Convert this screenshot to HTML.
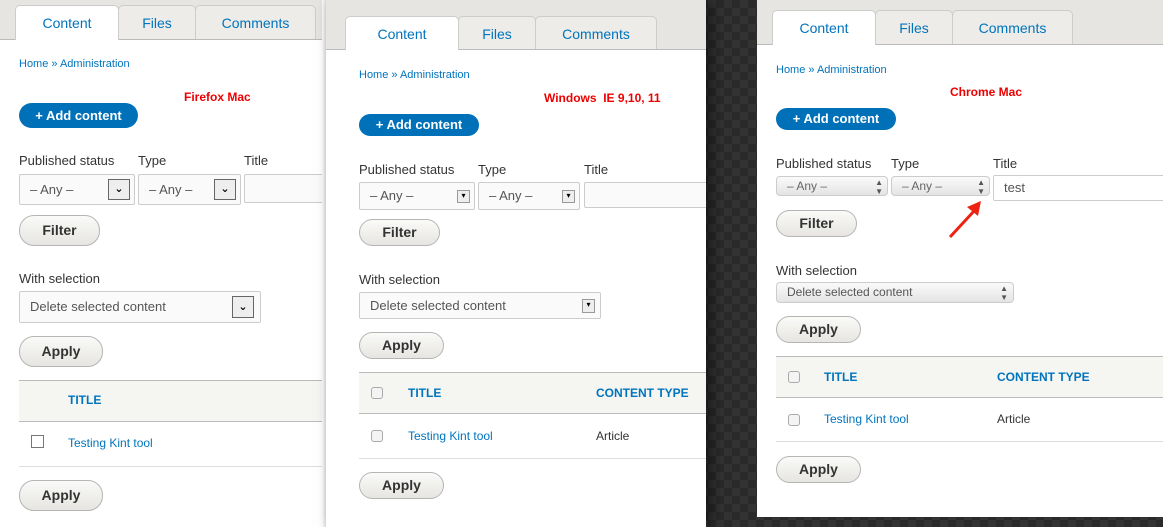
<!DOCTYPE html>
<html><head><meta charset="utf-8"><style>
*{box-sizing:border-box;margin:0;padding:0}
body{width:1163px;height:527px;position:relative;overflow:hidden;background:#2e2e2e;font-family:"Liberation Sans","DejaVu Sans",sans-serif;color:#333}
.chk{background-color:#2a2a2a;background-image:linear-gradient(45deg,#333 25%,transparent 25%,transparent 75%,#333 75%),linear-gradient(45deg,#333 25%,transparent 25%,transparent 75%,#333 75%);background-size:16px 16px;background-position:0 0,8px 8px}
.p{position:absolute;background:#fff;overflow:hidden}
.a{position:absolute;white-space:nowrap}
.bar{position:absolute;left:0;right:0;top:0;background:#e6e5e1;border-bottom:1px solid #bbb}
.tab{position:absolute;background:#edece8;border:1px solid #ccc;border-bottom:none;border-radius:5px 5px 0 0;color:#0074bd;font-size:14px;text-align:center}
.tab.on{background:#fff}
.bc{font-size:11px;color:#0074bd}
.red{color:#e00;font-weight:bold;font-size:12px}
.add{position:absolute;background:#0071b8;color:#fff;font-weight:bold;font-size:13px;border-radius:13px;text-align:center}
.lbl{font-size:13px;color:#333}
.sel{position:absolute;border:1px solid #ccc;background:#fafafa;font-size:13px;color:#555;padding-left:10px;border-radius:2px}
.btn{position:absolute;border:1px solid #b5b5b5;border-radius:15px;background:linear-gradient(#fafaf8,#e6e5e1);font-weight:bold;font-size:14px;color:#333;text-align:center}
.th{position:absolute;background:#f5f5f2;border-top:1px solid #bbb;border-bottom:1px solid #bbb}
.tl{color:#0074bd;font-size:12px;font-weight:bold}
.lnk{color:#0074bd;font-size:12px}
.cb{position:absolute;width:12px;height:12px;border:1px solid #aaa;border-radius:3px;background:#f4f4f4}
.ffarrow{position:absolute;width:22px;border:1px solid #666;background:#eee;font-size:11px;text-align:center;color:#000;font-weight:bold}
</style></head><body>
<div class="chk" style="position:absolute;left:700px;top:0;width:463px;height:527px"></div>

<!-- Panel 1 -->
<div class="p" style="left:0;top:0;width:330px;height:527px">
 <div class="bar" style="height:40px"></div>
 <div class="tab on" style="left:15px;top:5px;width:104px;height:35px;line-height:34px">Content</div>
 <div class="tab" style="left:118px;top:5px;width:78px;height:34px;line-height:34px">Files</div>
 <div class="tab" style="left:195px;top:5px;width:121px;height:34px;line-height:34px">Comments</div>
 <div class="a bc" style="left:19px;top:58px">Home » Administration</div>
 <div class="a red" style="left:184px;top:90px">Firefox Mac</div>
 <div class="add" style="left:19px;top:103px;width:119px;height:25px;line-height:25px">+ Add content</div>
 <div class="a lbl" style="left:19px;top:153px">Published status</div>
 <div class="a lbl" style="left:138px;top:153px">Type</div>
 <div class="a lbl" style="left:244px;top:153px">Title</div>
 <div class="sel" style="left:19px;top:174px;width:116px;height:31px;line-height:29px">– Any –<div class="ffarrow" style="right:4px;top:4px;height:21px;line-height:19px">⌄</div></div>
 <div class="sel" style="left:138px;top:174px;width:103px;height:31px;line-height:29px">– Any –<div class="ffarrow" style="right:4px;top:4px;height:21px;line-height:19px">⌄</div></div>
 <div class="sel" style="left:244px;top:174px;width:100px;height:29px"></div>
 <div class="btn" style="left:19px;top:215px;width:81px;height:31px;line-height:29px">Filter</div>
 <div class="a lbl" style="left:19px;top:271px">With selection</div>
 <div class="sel" style="left:19px;top:291px;width:242px;height:32px;line-height:30px">Delete selected content<div class="ffarrow" style="right:6px;top:4px;height:22px;line-height:20px">⌄</div></div>
 <div class="btn" style="left:19px;top:336px;width:84px;height:31px;line-height:29px">Apply</div>
 <div class="th" style="left:19px;top:380px;width:320px;height:42px"></div>
 <div class="a tl" style="left:68px;top:393px">TITLE</div>
 <div class="cb" style="left:31px;top:435px;width:13px;height:13px;border-radius:0;background:#fff;border-color:#777"></div>
 <div class="a lnk" style="left:68px;top:436px">Testing Kint tool</div>
 <div style="position:absolute;left:19px;top:466px;width:320px;height:1px;background:#ddd"></div>
 <div class="btn" style="left:19px;top:480px;width:84px;height:31px;line-height:29px">Apply</div>
</div>
<div style="position:absolute;left:322px;top:0;width:8px;height:527px;background:linear-gradient(90deg,#fff,#ccc)"></div>

<!-- Panel 2 -->
<div class="p" style="left:326px;top:0;width:380px;height:527px;box-shadow:6px 0 14px rgba(0,0,0,.5)">
 <div class="bar" style="height:50px"></div>
 <div class="tab on" style="left:19px;top:16px;width:114px;height:34px;line-height:34px">Content</div>
 <div class="tab" style="left:132px;top:16px;width:78px;height:33px;line-height:34px">Files</div>
 <div class="tab" style="left:209px;top:16px;width:122px;height:33px;line-height:34px">Comments</div>
 <div class="a bc" style="left:33px;top:69px">Home » Administration</div>
 <div class="a red" style="left:218px;top:91px">Windows &nbsp;IE 9,10, 11</div>
 <div class="add" style="left:33px;top:114px;width:120px;height:22px;line-height:22px">+ Add content</div>
 <div class="a lbl" style="left:33px;top:162px">Published status</div>
 <div class="a lbl" style="left:152px;top:162px">Type</div>
 <div class="a lbl" style="left:258px;top:162px">Title</div>
 <div class="sel" style="left:33px;top:182px;width:116px;height:28px;line-height:26px">– Any –<div class="ffarrow" style="right:4px;top:7px;width:13px;height:13px;line-height:9px;font-size:8px;border-color:#999">▾</div></div>
 <div class="sel" style="left:152px;top:182px;width:102px;height:28px;line-height:26px">– Any –<div class="ffarrow" style="right:4px;top:7px;width:13px;height:13px;line-height:9px;font-size:8px;border-color:#999">▾</div></div>
 <div class="sel" style="left:258px;top:182px;width:140px;height:26px"></div>
 <div class="btn" style="left:33px;top:219px;width:81px;height:27px;line-height:25px">Filter</div>
 <div class="a lbl" style="left:33px;top:272px">With selection</div>
 <div class="sel" style="left:33px;top:292px;width:242px;height:27px;line-height:25px">Delete selected content<div class="ffarrow" style="right:5px;top:6px;width:13px;height:14px;line-height:10px;font-size:8px;border-color:#999">▾</div></div>
 <div class="btn" style="left:33px;top:332px;width:85px;height:27px;line-height:25px">Apply</div>
 <div class="th" style="left:33px;top:372px;width:360px;height:42px"></div>
 <div class="cb" style="left:45px;top:387px"></div>
 <div class="a tl" style="left:82px;top:386px">TITLE</div>
 <div class="a tl" style="left:270px;top:386px">CONTENT TYPE</div>
 <div class="cb" style="left:45px;top:430px"></div>
 <div class="a lnk" style="left:82px;top:429px">Testing Kint tool</div>
 <div class="a" style="left:270px;top:429px;font-size:12px;color:#333">Article</div>
 <div style="position:absolute;left:33px;top:458px;width:360px;height:1px;background:#ddd"></div>
 <div class="btn" style="left:33px;top:472px;width:85px;height:27px;line-height:25px">Apply</div>
</div>

<!-- Panel 3 -->
<div class="p" style="left:757px;top:0;width:406px;height:517px">
 <div class="bar" style="height:45px"></div>
 <div class="tab on" style="left:15px;top:10px;width:104px;height:35px;line-height:34px">Content</div>
 <div class="tab" style="left:118px;top:10px;width:78px;height:34px;line-height:34px">Files</div>
 <div class="tab" style="left:195px;top:10px;width:121px;height:34px;line-height:34px">Comments</div>
 <div class="a bc" style="left:19px;top:64px">Home » Administration</div>
 <div class="a red" style="left:193px;top:85px">Chrome Mac</div>
 <div class="add" style="left:19px;top:108px;width:120px;height:22px;line-height:22px">+ Add content</div>
 <div class="a lbl" style="left:19px;top:156px">Published status</div>
 <div class="a lbl" style="left:134px;top:156px">Type</div>
 <div class="a lbl" style="left:236px;top:156px">Title</div>
 <div class="sel" style="left:19px;top:176px;width:112px;height:20px;line-height:18px;border-radius:4px;background:linear-gradient(#fafafa,#e4e4e4);font-size:12px;color:#666">– Any –<span style="position:absolute;right:4px;top:0;font-size:8px;line-height:9px;color:#555;padding-top:1px">▲<br>▼</span></div>
 <div class="sel" style="left:134px;top:176px;width:99px;height:20px;line-height:18px;border-radius:4px;background:linear-gradient(#fafafa,#e4e4e4);font-size:12px;color:#666">– Any –<span style="position:absolute;right:4px;top:0;font-size:8px;line-height:9px;color:#555;padding-top:1px">▲<br>▼</span></div>
 <div class="sel" style="left:236px;top:175px;width:180px;height:26px;line-height:24px;background:#fff">test</div>
 <svg class="a" style="left:190px;top:198px" width="40" height="42"><path d="M3 39 L28 12" stroke="#e21" stroke-width="3"/><path d="M20 9 L34 3 L31 18 Z" fill="#e21"/></svg>
 <div class="btn" style="left:19px;top:210px;width:81px;height:27px;line-height:25px">Filter</div>
 <div class="a lbl" style="left:19px;top:263px">With selection</div>
 <div class="sel" style="left:19px;top:282px;width:238px;height:21px;line-height:19px;border-radius:4px;background:linear-gradient(#fafafa,#e4e4e4);font-size:12px">Delete selected content<span style="position:absolute;right:5px;top:0;font-size:8px;line-height:9px;color:#555;padding-top:1px">▲<br>▼</span></div>
 <div class="btn" style="left:19px;top:316px;width:85px;height:27px;line-height:25px">Apply</div>
 <div class="th" style="left:19px;top:356px;width:400px;height:42px"></div>
 <div class="cb" style="left:31px;top:371px"></div>
 <div class="a tl" style="left:67px;top:370px">TITLE</div>
 <div class="a tl" style="left:240px;top:370px">CONTENT TYPE</div>
 <div class="cb" style="left:31px;top:414px"></div>
 <div class="a lnk" style="left:67px;top:412px">Testing Kint tool</div>
 <div class="a" style="left:240px;top:412px;font-size:12px;color:#333">Article</div>
 <div style="position:absolute;left:19px;top:441px;width:400px;height:1px;background:#ddd"></div>
 <div class="btn" style="left:19px;top:456px;width:85px;height:27px;line-height:25px">Apply</div>
</div>
</body></html>
